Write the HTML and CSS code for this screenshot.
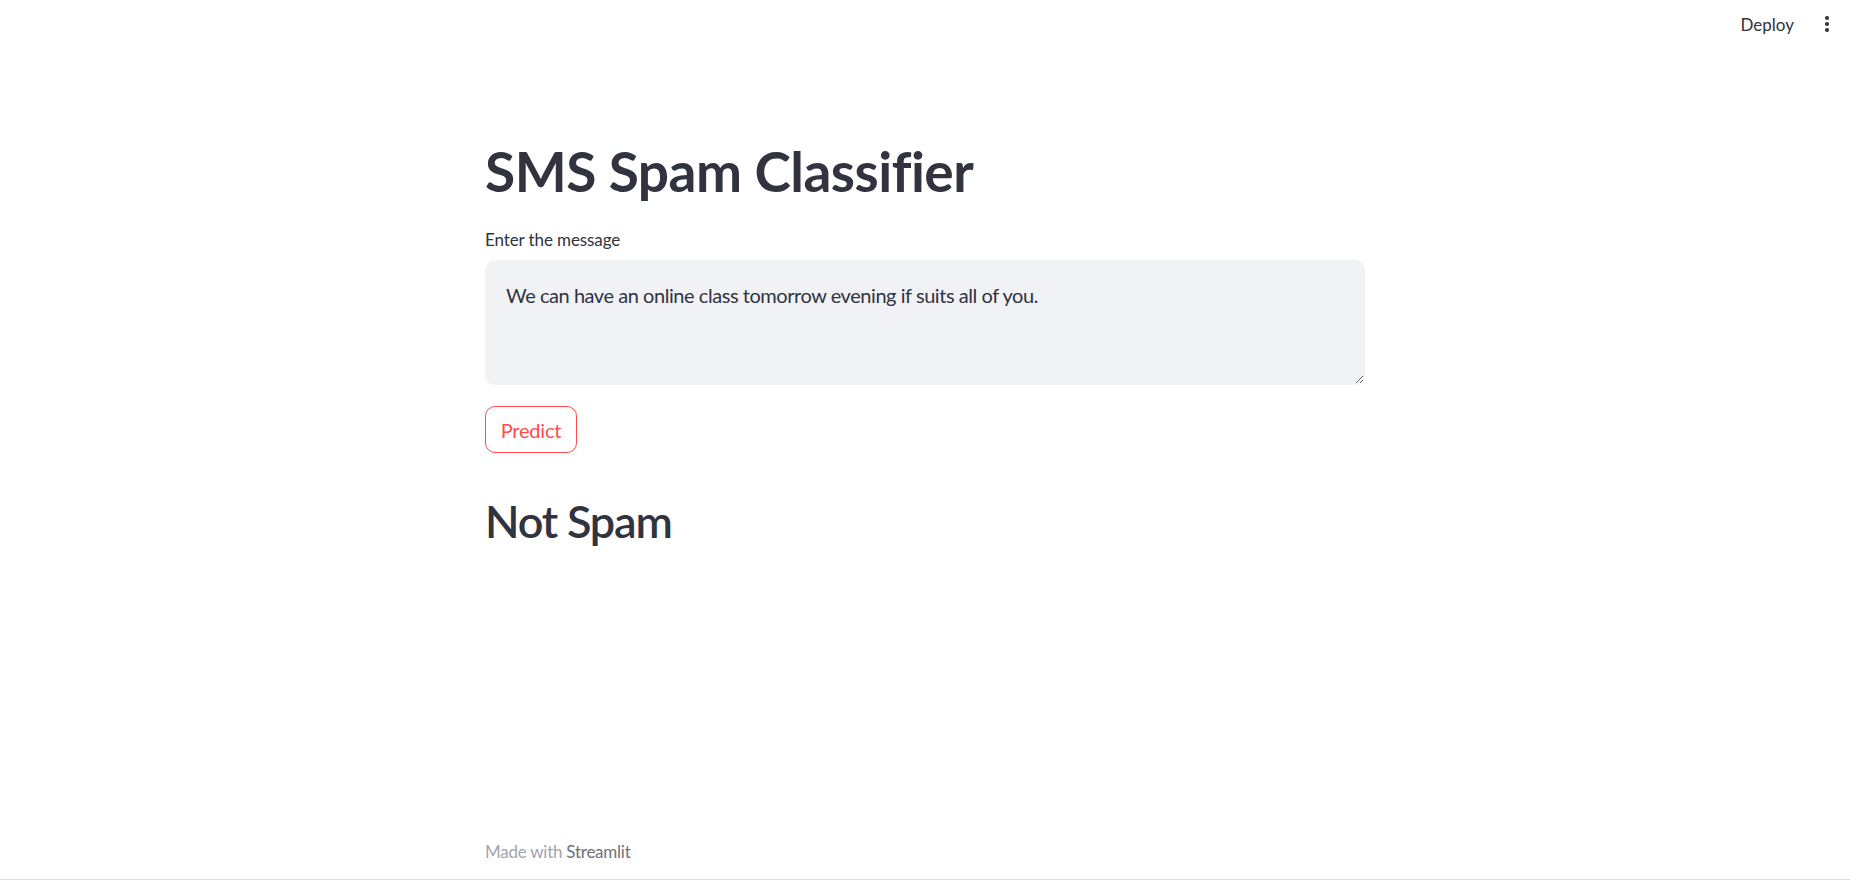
FILE: index.html
```html
<!DOCTYPE html>
<html lang="en">
<head>
<meta charset="utf-8">
<title>SMS Spam Classifier</title>
<link rel="stylesheet" href="styles.css">
</head>
<body>
<div class="app">
  <header class="topbar">
    <span class="deploy">Deploy</span>
    <span class="kebab" aria-label="menu">
      <svg width="6" height="18" viewBox="0 0 6 18"><circle cx="3" cy="3" r="2.1" fill="#31333F"/><circle cx="3" cy="9" r="2.1" fill="#31333F"/><circle cx="3" cy="15" r="2.1" fill="#31333F"/></svg>
    </span>
  </header>
  <main class="main">
    <h1 class="title">SMS Spam Classifier</h1>
    <label class="label" for="msg">Enter the message</label>
    <textarea id="msg" class="msg">We can have an online class tomorrow evening if suits all of you.</textarea>
    <div class="btnrow"><button class="predict">Predict</button></div>
    <h2 class="result">Not Spam</h2>
  </main>
  <footer class="footer">
    <span class="made">Made with </span><span class="brand">Streamlit</span>
  </footer>
</div>
</body>
</html>
```
FILE: styles.css
```css
* { box-sizing: border-box; }
html, body { margin: 0; padding: 0; background: #fff; }
body {
  font-family: "Source Sans Pro", Lato, "Noto Sans", sans-serif;
  color: #31333F;
}
.app {
  height: 880px;
  display: flex;
  flex-direction: column;
  border-bottom: 1px solid #dcdcdc;
}
.topbar {
  height: 48px;
  display: flex;
  align-items: center;
  justify-content: flex-end;
  padding-right: 20px;
  gap: 30px;
}
.deploy {
  font-size: 17px;
  color: #31333F;
}
.kebab { display: flex; align-items: center; }
.main {
  width: 880px;
  margin: 0 auto;
  padding-top: 90px;
  flex: 1;
  display: flex;
  flex-direction: column;
  align-items: flex-start;
}
.title {
  margin: 0;
  font-size: 55px;
  line-height: 66px;
  font-weight: 700;
  letter-spacing: -0.5px;
}
.label {
  margin-top: 22px;
  font-size: 17px;
  line-height: 28px;
  letter-spacing: -0.1px;
}
.msg {
  margin-top: 6px;
  width: 880px;
  height: 125px;
  background: #F0F2F6;
  border: 1px solid transparent;
  border-radius: 10px;
  padding: 20px 20px;
  font-family: inherit;
  font-size: 20px;
  line-height: 28px;
  letter-spacing: -0.45px;
  color: #31333F;
  resize: vertical;
  outline: none;
}
.btnrow { margin-top: 21px; }
.predict {
  width: 92px;
  height: 47px;
  border: 1px solid #FF4B4B;
  border-radius: 10px;
  background: #fff;
  color: #FF4B4B;
  font-family: inherit;
  font-size: 20px;
  letter-spacing: -0.2px;
  padding: 0;
}
.result {
  margin: 41px 0 0 0;
  font-size: 45px;
  line-height: 54px;
  font-weight: 600;
  letter-spacing: -1.2px;
}
.footer {
  width: 880px;
  margin: 0 auto;
  font-size: 17px;
  line-height: 24px;
  letter-spacing: -0.25px;
  padding-bottom: 15px;
}
.made { color: #a3a4aa; }
.brand { color: #6f707a; }
```
